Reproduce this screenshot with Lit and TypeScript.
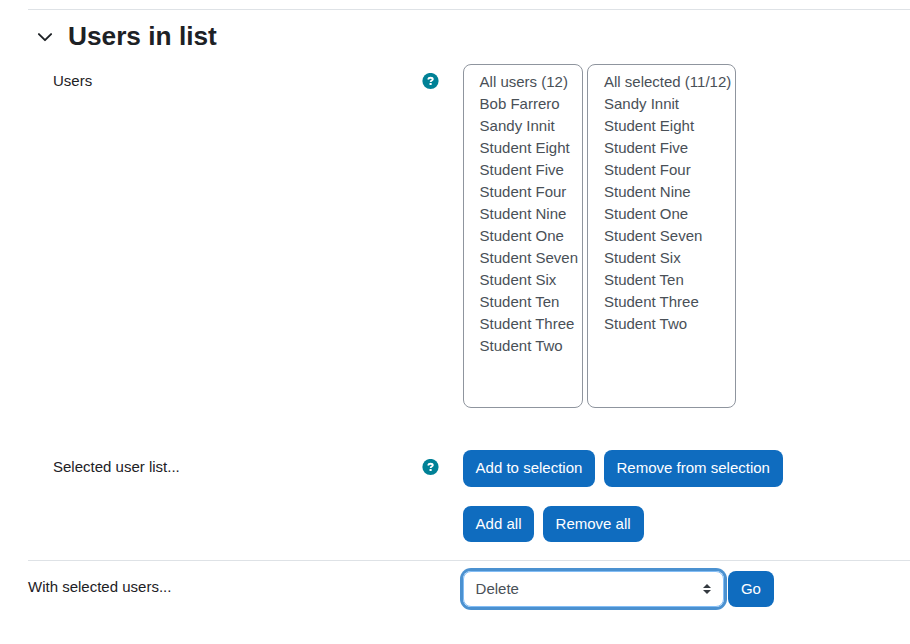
import { LitElement, html, css } from "lit";
import { customElement } from "lit/decorators.js";

const students = ["Eight", "Five", "Four", "Nine", "One", "Seven", "Six", "Ten", "Three", "Two"].map((n) => `Student ${n}`);
const available = ["All users (12)", "Bob Farrero", "Sandy Innit", ...students];
const selected = ["All selected (11/12)", "Sandy Innit", ...students];

@customElement("app-root")
export class AppRoot extends LitElement {
  static styles = css`
    :host { display: block; height: 644px; overflow: hidden; box-sizing: border-box; padding: 9px 0 0 28px; background: #fff; color: #1d2125; font: 15px/22px "Liberation Sans", Arial, sans-serif; }
    * { box-sizing: border-box; }
    .section { border-top: 1px solid #dee2e6; height: 551px; }
    .heading { display: flex; align-items: center; height: 54px; }
    .chevron { width: 16px; height: 16px; margin: 0 15px 0 9px; }
    h3 { margin: 0; padding-bottom: 2px; font-size: 26.25px; line-height: 32px; font-weight: 700; }
    .row { display: grid; grid-template-columns: 394px 40.6px 1fr; }
    .section .row { padding-left: 25px; grid-template-columns: 369px 40.6px 1fr; }
    .label { padding-top: 6px; }
    .footer .label { padding-top: 5px; }
    .help { width: 17px; height: 17px; margin-top: 9px; display: block; }
    .users { height: 386px; }
    .lists { display: flex; gap: 4.4px; align-items: flex-start; }
    .list { height: 344px; margin: 0; padding: 6px 4px 0 16px; list-style: none; border: 1px solid #8f959e; border-radius: 8px; color: #495057; white-space: nowrap; }
    .available { width: 120px; }
    .selected { width: 149px; }
    .buttons { display: flex; gap: 8.2px; margin-bottom: 19px; }
    .buttons.all { gap: 8.1px; }
    button { font: inherit; height: 37px; padding: 0 13px 1px; border: 0; border-radius: 8px; background: #0f6cbf; color: #fff; white-space: nowrap; }
    .all button, .go { height: 36px; padding-bottom: 0; }
    .footer { border-top: 1px solid #dee2e6; padding-top: 10px; }
    .action { display: flex; gap: 4.3px; }
    .select { width: 261px; height: 36px; display: flex; justify-content: space-between; align-items: center; padding: 0 12px; border: 1px solid #83bdf5; border-radius: 8px; box-shadow: 0 0 0 3px #4b91d0; color: #495057; }
    .arrows { width: 8px; height: 10px; }
  `;
  help() {
    return html`<svg class="help" viewBox="0 0 17 17"><circle cx="8.5" cy="8" r="8.1" fill="#008196"/><path d="M6.1 6.5C6.4 5.3 7.2 4.8 8.5 4.8c1.5 0 2.3.6 2.3 1.5 0 1.3-2.1 1.2-2.1 2.6" fill="none" stroke="#fff" stroke-width="1.9"/><rect x="7.5" y="10" width="2.2" height="2" rx=".5" fill="#fff"/></svg>`;
  }
  list(name: string, items: string[]) {
    return html`<ul class="list ${name}">${items.map((i) => html`<li>${i}</li>`)}</ul>`;
  }
  render() {
    return html`
      <div class="section">
        <div class="heading">
          <svg class="chevron" viewBox="0 0 16 16"><path d="M1.9 5.1 8 11.2l6.1-6.1" fill="none" stroke="#1d2125" stroke-width="1.9" stroke-linecap="round" stroke-linejoin="round"/></svg>
          <h3>Users in list</h3>
        </div>
        <div class="row users">
          <div class="label">Users</div>${this.help()}
          <div class="lists">${this.list("available", available)}${this.list("selected", selected)}</div>
        </div>
        <div class="row">
          <div class="label">Selected user list...</div>${this.help()}
          <div>
            <div class="buttons"><button>Add to selection</button><button>Remove from selection</button></div>
            <div class="buttons all"><button>Add all</button><button>Remove all</button></div>
          </div>
        </div>
      </div>
      <div class="footer row">
        <div class="label">With selected users...</div><span></span>
        <div class="action">
          <div class="select"><span>Delete</span><svg class="arrows" viewBox="0 0 8 10"><path d="M0 4 4 0l4 4zM0 6l4 4 4-4z" fill="#343a40"/></svg></div>
          <button class="go">Go</button>
        </div>
      </div>`;
  }
}
